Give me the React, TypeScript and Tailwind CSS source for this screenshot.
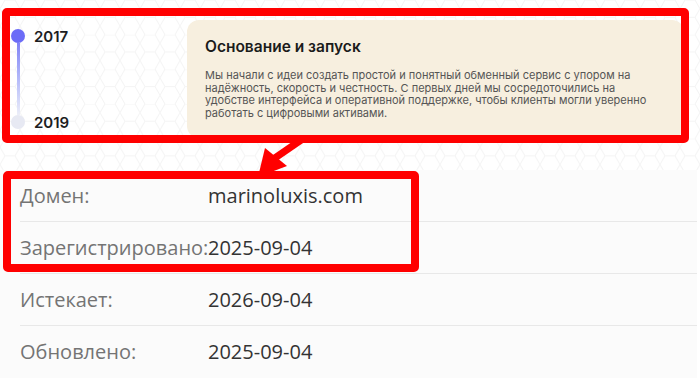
import React from "react";

const rows = [
  { label: "Домен:", value: "marinoluxis.com" },
  { label: "Зарегистрировано:", value: "2025-09-04" },
  { label: "Истекает:", value: "2026-09-04" },
  { label: "Обновлено:", value: "2025-09-04" },
];

function HexPattern() {
  return (
    <svg className="absolute inset-0 h-full w-full" aria-hidden="true">
      <defs>
        <pattern id="hex" width="20" height="34.64" patternUnits="userSpaceOnUse">
          <path
            d="M5 0 L15 0 L20 8.66 L15 17.32 L5 17.32 L0 8.66 Z M15 17.32 L20 8.66 M5 17.32 L0 26 L5 34.64 M15 17.32 L20 26 L15 34.64 M5 17.32 L15 17.32"
            fill="none"
            stroke="#f4f4f4"
            strokeWidth="1"
          />
        </pattern>
      </defs>
      <rect width="100%" height="100%" fill="url(#hex)" />
    </svg>
  );
}

export default function App() {
  return (
    <div className="relative h-[389px] w-[700px] overflow-hidden bg-white">
      {/* Top section */}
      <div className="relative h-[170px] w-full">
        <HexPattern />
        <div className="relative flex">
          {/* Timeline */}
          <div className="flex w-[187px] flex-col pl-[11px] pt-[29px] font-['Inter',sans-serif]">
            <div className="flex h-[14px] items-center gap-[9px]">
              <span className="h-[14px] w-[14px] rounded-full bg-[#6c6cf7]" />
              <span className="text-[15px] font-semibold leading-none text-[#1d1d1f]">2017</span>
            </div>
            <div className="ml-[5.5px] h-[72px] w-[3px] bg-gradient-to-b from-[#8282f5] to-[#eceef8]" />
            <div className="flex h-[14px] items-center gap-[9px]">
              <span className="h-[14px] w-[14px] rounded-full bg-[#e7e9f3]" />
              <span className="text-[15px] font-semibold leading-none text-[#1d1d1f]">2019</span>
            </div>
          </div>
          {/* Card */}
          <div className="mt-[20px] h-[118px] w-[497px] rounded-[12px] bg-[#f7efdf] px-[18px] pt-[17px] font-['Inter',sans-serif]">
            <div className="text-[15.5px] font-semibold leading-[20px] text-[#1b1b1b]">Основание и запуск</div>
            <div className="mt-[12px] text-[11px] leading-[12.7px] text-[#555555]">
              <div className="whitespace-nowrap">Мы начали с идеи создать простой и понятный обменный сервис с упором на</div>
              <div className="whitespace-nowrap">надёжность, скорость и честность. С первых дней мы сосредоточились на</div>
              <div className="whitespace-nowrap">удобстве интерфейса и оперативной поддержке, чтобы клиенты могли уверенно</div>
              <div className="whitespace-nowrap">работать с цифровыми активами.</div>
            </div>
          </div>
        </div>
      </div>

      {/* Table */}
      <div className="w-[697px] bg-[#fbfbfb] pl-[20px] font-['Open_Sans',sans-serif]">
        {rows.map((r, i) => (
          <div
            key={r.label}
            className={`flex h-[52px] items-center ${i < rows.length - 1 ? "border-b border-[#e8e8e8]" : ""}`}
          >
            <span className="w-[188px] shrink-0 whitespace-nowrap text-[20px] text-[#747474]">{r.label}</span>
            <span className="whitespace-nowrap text-[20px] text-[#333333]">{r.value}</span>
          </div>
        ))}
      </div>

      {/* Annotations */}
      <svg className="absolute left-0 top-0 h-[389px] w-[700px]" aria-hidden="true">
        <line x1="304" y1="138" x2="272" y2="160" stroke="#ff0000" strokeWidth="7" />
        <polygon points="265,148 287,166 258,177" fill="#ff0000" />
      </svg>
      <div className="absolute left-[2px] top-[8px] h-[135px] w-[687px] rounded-[5px] border-[8px] border-[#ff0000]" />
      <div className="absolute left-[3px] top-[171px] h-[101px] w-[416px] rounded-[5px] border-[8px] border-[#ff0000]" />
    </div>
  );
}
